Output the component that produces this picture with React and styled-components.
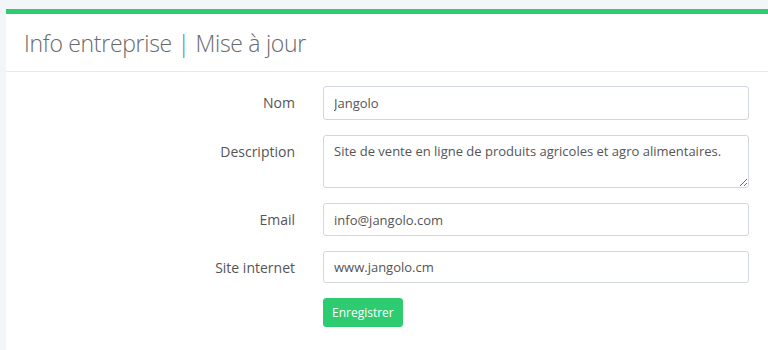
import React from "react";
import styled, { createGlobalStyle } from "styled-components";

const GlobalStyle = createGlobalStyle`
  html, body {
    margin: 0;
    padding: 0;
    background: #f3f6f9;
    overflow: hidden;
  }
  body {
    font-family: "Open Sans", "Noto Sans", Arial, sans-serif;
  }
`;

const Page = styled.div`
  padding: 9px 0 0 6px;
  height: 350px;
  box-sizing: border-box;
`;

const Card = styled.div`
  background: #fff;
  border-top: 5px solid #2ecc71;
  width: 800px;
  height: 100%;
`;

const Header = styled.div`
  height: 57px;
  display: flex;
  align-items: center;
  padding-left: 18px;
  border-bottom: 1px solid #e6e9ed;
`;

const Title = styled.h2`
  margin: 0;
  font-size: 23px;
  font-weight: 300;
  color: #676a6c;
  letter-spacing: -0.3px;
`;

const Pipe = styled.span`
  color: #3c8dbc;
`;

const Form = styled.form`
  display: grid;
  grid-template-columns: 289px 426px;
  column-gap: 28px;
  row-gap: 15px;
  padding-top: 14px;
`;

const Label = styled.label`
  text-align: right;
  font-size: 14px;
  line-height: 20px;
  padding-top: 7px;
  color: #555;
`;

const Input = styled.input`
  box-sizing: border-box;
  width: 100%;
  height: ${({ $h }) => $h || 33}px;
  border: 1px solid #d2d6de;
  border-radius: 3px;
  padding: 0 10px;
  font-family: inherit;
  font-size: 13px;
  color: #555;
  outline: none;
`;

const TextArea = styled.textarea`
  box-sizing: border-box;
  width: 100%;
  height: 53px;
  border: 1px solid #d2d6de;
  border-radius: 3px;
  padding: 6px 10px;
  font-family: inherit;
  font-size: 13px;
  line-height: 18px;
  color: #555;
  resize: vertical;
  outline: none;
  display: block;
`;

const Button = styled.button`
  grid-column: 2;
  justify-self: start;
  height: 29px;
  padding: 0 8px;
  background: #2ecc71;
  border: 1px solid #2ecc71;
  border-radius: 3px;
  color: #fff;
  font-family: inherit;
  font-size: 12px;
  cursor: pointer;
`;

export default function App() {
  return (
    <>
      <GlobalStyle />
      <Page>
        <Card>
          <Header>
            <Title>
              Info entreprise <Pipe>|</Pipe> Mise à jour
            </Title>
          </Header>
          <Form onSubmit={(e) => e.preventDefault()}>
            <Label>Nom</Label>
            <Input defaultValue="Jangolo" $h={34} />
            <Label>Description</Label>
            <TextArea defaultValue="Site de vente en ligne de produits agricoles et agro alimentaires." />
            <Label>Email</Label>
            <Input defaultValue="info@jangolo.com" />
            <Label>Site internet</Label>
            <Input defaultValue="www.jangolo.cm" $h={32} />
            <Button type="submit">Enregistrer</Button>
          </Form>
        </Card>
      </Page>
    </>
  );
}
